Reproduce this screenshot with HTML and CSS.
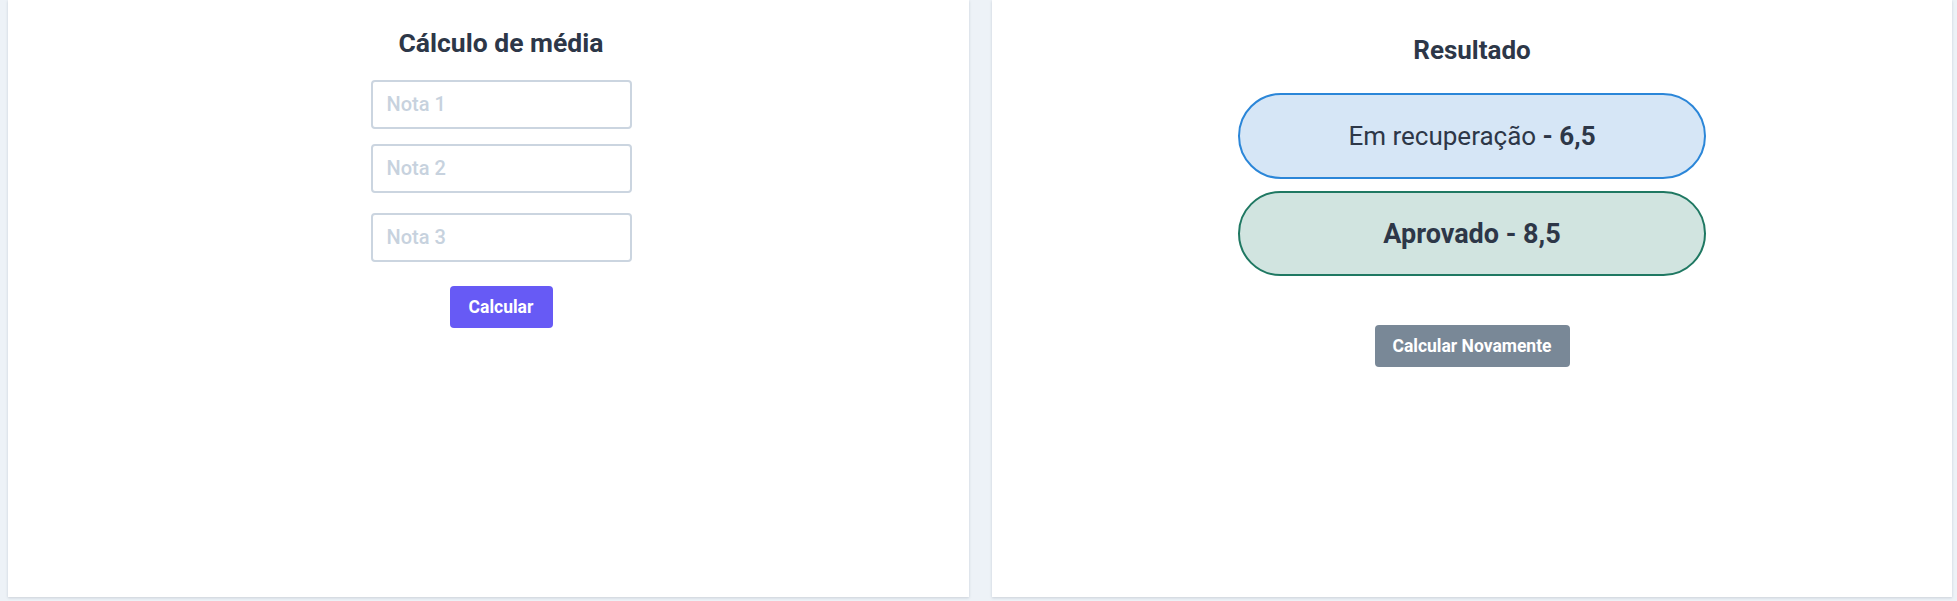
FILE: index.html
```html
<!DOCTYPE html>
<html lang="pt-BR">
<head>
<meta charset="utf-8">
<title>Cálculo de média</title>
<link rel="stylesheet" href="styles.css">
</head>
<body>
<main class="page">
  <section class="panel panel-form">
    <h1 class="title title-form">Cálculo de média</h1>
    <form class="form">
      <input class="field" type="text" placeholder="Nota 1">
      <input class="field field-2" type="text" placeholder="Nota 2">
      <input class="field field-3" type="text" placeholder="Nota 3">
      <button class="btn btn-primary" type="button">Calcular</button>
    </form>
  </section>
  <section class="panel panel-result">
    <h2 class="title title-result">Resultado</h2>
    <div class="pill pill-blue"><span class="pill-text">Em recuperação <strong>- 6,5</strong></span></div>
    <div class="pill pill-green"><span class="pill-text"><strong>Aprovado - 8,5</strong></span></div>
    <button class="btn btn-secondary" type="button">Calcular Novamente</button>
  </section>
</main>
</body>
</html>
```

FILE: styles.css
```css
* { box-sizing: border-box; }

html, body {
  margin: 0;
  padding: 0;
  background: #edf2f7;
  height: 601px;
  overflow: hidden;
}

body {
  font-family: Roboto, "Liberation Sans", sans-serif;
  color: #2d3748;
}

.page {
  display: grid;
  grid-template-columns: 961px 960px;
  column-gap: 23px;
  padding: 0 5px 0 8px;
}

.panel {
  background: #ffffff;
  height: 597px;
  display: flex;
  flex-direction: column;
  align-items: center;
  box-shadow: 0 1px 3px rgba(45, 55, 72, 0.12), 0 1px 2px rgba(45, 55, 72, 0.06);
}

.panel-form { padding-left: 25px; }

.title {
  margin: 0;
  font-size: 26.5px;
  line-height: 1.2;
  font-weight: 700;
  color: #2d3748;
}

.title-form { margin-top: 27px; }
.title-result { margin-top: 35px; font-size: 26px; }

.form {
  display: flex;
  flex-direction: column;
  align-items: center;
  margin-top: 21px;
}

.field {
  width: 261px;
  height: 49px;
  border: 2px solid #cbd5e0;
  border-radius: 4px;
  padding: 0 14px;
  font-family: inherit;
  font-size: 20px;
  font-weight: 500;
  color: #2d3748;
  background: #fff;
  outline: none;
}

.field::placeholder { color: #c7d2de; }

.field-2 { margin-top: 15px; }
.field-3 { margin-top: 20px; }

.btn {
  border: 0;
  border-radius: 4px;
  height: 42px;
  padding: 0;
  font-family: inherit;
  font-size: 17.5px;
  font-weight: 700;
  color: #ffffff;
  cursor: pointer;
}

.btn-primary {
  margin-top: 24px;
  width: 103px;
  background: #675af5;
}

.btn-secondary {
  margin-top: 49px;
  width: 195px;
  background: #798897;
}

.pill {
  width: 468px;
  height: 86px;
  border-radius: 43px;
  border: 2px solid;
  display: flex;
  align-items: center;
  justify-content: center;
  font-size: 26px;
  color: #2d3748;
}

.pill-text { white-space: pre; }

.pill strong { font-weight: 700; }

.pill-blue {
  margin-top: 27px;
  background: #d6e6f6;
  border-color: #2b86d8;
}

.pill-green {
  margin-top: 12px;
  height: 85px;
  font-size: 27px;
  background: #d1e4e0;
  border-color: #1f7862;
}
```
